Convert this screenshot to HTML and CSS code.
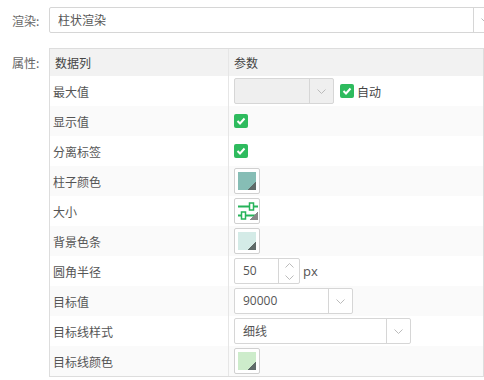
FILE: index.html
```html
<!DOCTYPE html>
<html lang="zh-CN">
<head>
  <meta charset="UTF-8">
  <title>柱状渲染</title>
  <link rel="stylesheet" href="styles.css">
</head>
<body>
  <div class="form">
    <div class="form-row">
      <label class="form-label">渲染:</label>
      <div class="combo combo-wide">
        <span class="combo-text">柱状渲染</span>
        <span class="combo-arrow"><svg width="9" height="5" viewBox="0 0 9 5"><path d="M0.5 0.5 L4.5 4.5 L8.5 0.5" fill="none" stroke="#bbb"/></svg></span>
      </div>
    </div>

    <div class="form-row props">
      <label class="form-label">属性:</label>
      <div class="grid">
        <div class="grid-row head">
          <div class="name">数据列</div>
          <div class="param">参数</div>
        </div>

        <div class="grid-row">
          <div class="name">最大值</div>
          <div class="param">
            <div class="combo combo-max disabled">
              <span class="combo-text"></span>
              <span class="combo-arrow"><svg width="9" height="5" viewBox="0 0 9 5"><path d="M0.5 0.5 L4.5 4.5 L8.5 0.5" fill="none" stroke="#bbb"/></svg></span>
            </div>
            <span class="check check-auto"><svg width="14" height="14" viewBox="0 0 14 14"><path d="M3.5 7 L6 9.5 L10.5 4.5" fill="none" stroke="#fff" stroke-width="2"/></svg></span>
            <span class="check-label">自动</span>
          </div>
        </div>

        <div class="grid-row alt">
          <div class="name">显示值</div>
          <div class="param">
            <span class="check"><svg width="14" height="14" viewBox="0 0 14 14"><path d="M3.5 7 L6 9.5 L10.5 4.5" fill="none" stroke="#fff" stroke-width="2"/></svg></span>
          </div>
        </div>

        <div class="grid-row">
          <div class="name">分离标签</div>
          <div class="param">
            <span class="check"><svg width="14" height="14" viewBox="0 0 14 14"><path d="M3.5 7 L6 9.5 L10.5 4.5" fill="none" stroke="#fff" stroke-width="2"/></svg></span>
          </div>
        </div>

        <div class="grid-row alt">
          <div class="name">柱子颜色</div>
          <div class="param">
            <span class="swatch"><span class="swatch-fill fill-teal"></span></span>
          </div>
        </div>

        <div class="grid-row">
          <div class="name">大小</div>
          <div class="param">
            <span class="swatch">
              <span class="swatch-fill fill-size">
                <svg width="20" height="20" viewBox="0 0 20 20">
                  <path d="M0 4.5 H20 M0 13.5 H20" stroke="#27b35a" stroke-width="2"/>
                  <rect x="11.5" y="1" width="4" height="7" fill="#fff" stroke="#27b35a" stroke-width="1.5"/>
                  <rect x="3.5" y="10" width="4" height="7" fill="#fff" stroke="#27b35a" stroke-width="1.5"/>
                </svg>
              </span>
            </span>
          </div>
        </div>

        <div class="grid-row alt">
          <div class="name">背景色条</div>
          <div class="param">
            <span class="swatch"><span class="swatch-fill fill-pale"></span></span>
          </div>
        </div>

        <div class="grid-row">
          <div class="name">圆角半径</div>
          <div class="param">
            <div class="spinner">
              <span class="spinner-text">50</span>
              <span class="spinner-btns">
                <span class="spin"><svg width="9" height="5" viewBox="0 0 9 5"><path d="M0.5 4.5 L4.5 0.5 L8.5 4.5" fill="none" stroke="#bbb"/></svg></span>
                <span class="spin"><svg width="9" height="5" viewBox="0 0 9 5"><path d="M0.5 0.5 L4.5 4.5 L8.5 0.5" fill="none" stroke="#bbb"/></svg></span>
              </span>
            </div>
            <span class="unit">px</span>
          </div>
        </div>

        <div class="grid-row alt">
          <div class="name">目标值</div>
          <div class="param">
            <div class="combo combo-target">
              <span class="combo-text num">90000</span>
              <span class="combo-arrow"><svg width="9" height="5" viewBox="0 0 9 5"><path d="M0.5 0.5 L4.5 4.5 L8.5 0.5" fill="none" stroke="#bbb"/></svg></span>
            </div>
          </div>
        </div>

        <div class="grid-row">
          <div class="name">目标线样式</div>
          <div class="param">
            <div class="combo combo-line">
              <span class="combo-text">细线</span>
              <span class="combo-arrow"><svg width="9" height="5" viewBox="0 0 9 5"><path d="M0.5 0.5 L4.5 4.5 L8.5 0.5" fill="none" stroke="#bbb"/></svg></span>
            </div>
          </div>
        </div>

        <div class="grid-row alt">
          <div class="name">目标线颜色</div>
          <div class="param">
            <span class="swatch"><span class="swatch-fill fill-green"></span></span>
          </div>
        </div>
      </div>
    </div>
  </div>
</body>
</html>
```

FILE: styles.css
```css
body {
  margin: 0;
  font-family: "Noto Sans CJK SC", "Open Sans", sans-serif;
  font-size: 12px;
  color: #555;
  background: #fff;
  overflow: hidden;
}
.form {
  padding-top: 7px;
}
.form-row {
  display: flex;
  align-items: center;
}
.form-label {
  width: 37px;
  padding-left: 12px;
  flex-shrink: 0;
  color: #666;
}
.props {
  align-items: flex-start;
  margin-top: 15px;
}
.props .form-label {
  line-height: 27px;
  margin-top: 1px;
}

/* combo box */
.combo {
  display: flex;
  height: 26px;
  box-sizing: border-box;
  border: 1px solid #d6d6d6;
  border-radius: 2px;
  background: #fff;
  flex-shrink: 0;
}
.combo-text {
  flex: 1;
  padding-left: 8px;
  line-height: 24px;
  color: #555;
}
.combo-arrow {
  width: 23px;
  border-left: 1px solid #d6d6d6;
  display: flex;
  align-items: center;
  justify-content: center;
}
.combo-wide {
  width: 449px;
}
.combo-max {
  width: 100px;
}
.combo.disabled {
  background: #efefef;
}
.combo-target {
  width: 119px;
}
.combo-line {
  width: 177px;
}
.num {
  font-family: "Open Sans", sans-serif;
}

/* property grid */
.grid {
  width: 435px;
  box-sizing: border-box;
  border: 1px solid #ddd;
}
.grid-row {
  display: flex;
  height: 30px;
}
.grid-row.alt {
  background: #fafafa;
}
.grid-row.head {
  height: 27px;
  background: #f2f2f2;
  color: #444;
}
.name {
  width: 179px;
  box-sizing: border-box;
  border-right: 1px solid #e6e6e6;
  padding-left: 3px;
  display: flex;
  align-items: center;
}
.head .name {
  padding-left: 5px;
}
.param {
  flex: 1;
  padding-left: 5px;
  display: flex;
  align-items: center;
}

/* checkbox */
.check {
  width: 14px;
  height: 14px;
  border-radius: 2px;
  background: #2ebb5e;
  display: inline-flex;
}
.check-auto {
  margin-left: 6px;
}
.check-label {
  margin-left: 3px;
  color: #444;
}

/* color swatch */
.swatch {
  width: 26px;
  height: 26px;
  box-sizing: border-box;
  border: 1px solid #d0d0d0;
  border-radius: 2px;
  background: #fff;
  padding: 3px;
  display: inline-flex;
}
.swatch-fill {
  flex: 1;
  position: relative;
}
.swatch-fill::after {
  content: "";
  position: absolute;
  right: 0;
  bottom: 0;
  width: 8px;
  height: 8px;
  background: linear-gradient(135deg, transparent 50%, #5f6b69 50%);
}
.fill-teal {
  background: #86bdb5;
}
.fill-pale {
  background: #d4ebe7;
}
.fill-green {
  background: #cdeccb;
}
.fill-size {
  background: #fff;
  display: flex;
}
.fill-size::after {
  background: linear-gradient(135deg, transparent 50%, #888 50%);
}

/* number spinner */
.spinner {
  display: flex;
  width: 66px;
  height: 26px;
  box-sizing: border-box;
  border: 1px solid #d6d6d6;
  border-radius: 2px;
  background: #fff;
}
.spinner-text {
  flex: 1;
  padding-left: 8px;
  line-height: 24px;
  font-family: "Open Sans", sans-serif;
  color: #555;
}
.spinner-btns {
  width: 20px;
  border-left: 1px solid #d6d6d6;
  display: flex;
  flex-direction: column;
}
.spin {
  flex: 1;
  display: flex;
  align-items: center;
  justify-content: center;
}
.unit {
  margin-left: 3px;
  font-family: "Open Sans", sans-serif;
  font-size: 13px;
  color: #555;
}
```
